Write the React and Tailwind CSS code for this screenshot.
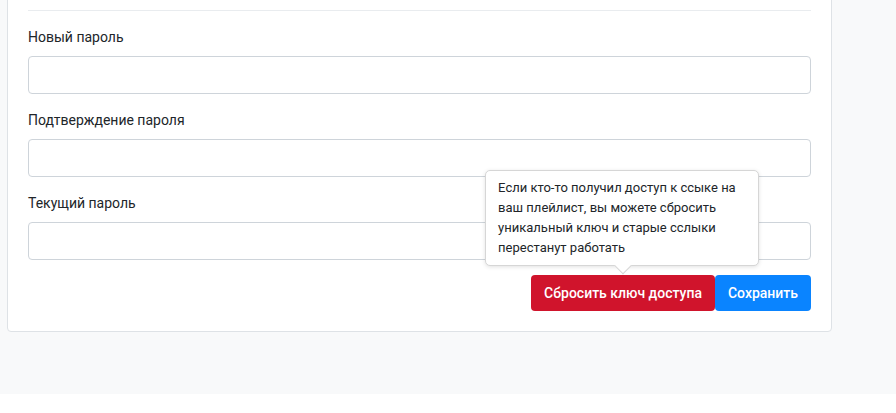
import React from 'react';

const Field = ({ label }) => (
    <div className="mb-4">
        <label className="block mb-2 text-[14px] leading-[21px] text-[#212529]">{label}</label>
        <input type="password" className="block w-full h-[38px] px-3 bg-white border border-[#ced4da] rounded-[4px] outline-none" />
    </div>
);

export default function App() {
    return (
        <div className="min-h-[413px] bg-[#f8f9fa] pl-[7px] pt-0 font-['Roboto','Liberation_Sans',sans-serif]">
            <div className="w-[825px] -mt-[19px] bg-white border border-[#dee2e6] rounded-[4px] px-5 pt-5 pb-5">
                <hr className="border-0 border-t border-[#e9ecef] mt-[8px] mb-4" />
                <Field label="Новый пароль" />
                <Field label="Подтверждение пароля" />
                <Field label="Текущий пароль" />
                <div className="flex justify-end -mt-[1px]">
                    <div className="relative">
                        <button className="h-[36px] px-[13px] bg-[#d0142c] text-white text-[14px] font-medium rounded-[4px] leading-[36px]">
                            Сбросить ключ доступа
                        </button>
                        {/* tooltip */}
                        <div className="absolute bottom-[45px] left-[-46px] w-[274px] bg-white border border-[#d6d6d6] rounded-[5px] shadow-[0_1px_4px_rgba(0,0,0,0.12)] px-3 py-[7px] text-[13px] leading-[20px] text-[#212529]">
                            Если кто-то получил доступ к ссыке на ваш плейлист, вы можете сбросить уникальный ключ и старые сслыки перестанут работать
                            <div className="absolute left-[131px] -bottom-[7px] w-[12px] h-[12px] bg-white border-r border-b border-[#d6d6d6] rotate-45"></div>
                        </div>
                    </div>
                    <button className="h-[36px] px-[13px] bg-[#0a84ff] text-white text-[14px] font-medium rounded-[4px] leading-[36px]">
                        Сохранить
                    </button>
                </div>
            </div>
        </div>
    );
}
